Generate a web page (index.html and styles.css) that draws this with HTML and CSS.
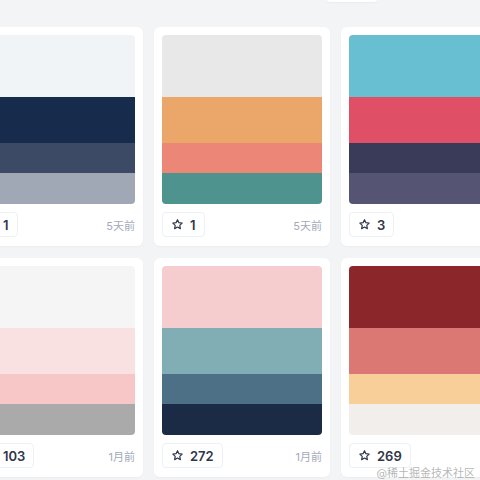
FILE: index.html
```html
<!DOCTYPE html>
<html lang="zh-CN">
<head>
    <meta charset="UTF-8">
    <meta name="viewport" content="width=device-width, initial-scale=1.0">
    <title>配色方案</title>
    <link rel="stylesheet" href="styles.css">
</head>
<body>

<div class="toolbar">
    <div class="toolbar-btn"></div>
</div>

<div class="palette-grid">
    <!-- 第一行 -->
    <div class="card">
        <div class="swatch">
            <div class="band b1" style="background:#f1f4f7"></div>
            <div class="band b2" style="background:#172b4d"></div>
            <div class="band b3" style="background:#3c4a66"></div>
            <div class="band b4" style="background:#a0a7b5"></div>
        </div>
        <div class="card-foot">
            <button class="star-btn"><svg viewBox="0 0 24 24"><path d="M12 3.2l2.6 5.5 6 .8-4.4 4.1 1.1 6L12 16.7l-5.3 2.9 1.1-6-4.4-4.1 6-.8z"/></svg>1</button>
            <span class="time">5天前</span>
        </div>
    </div>
    <div class="card">
        <div class="swatch">
            <div class="band b1" style="background:#e8e8e8"></div>
            <div class="band b2" style="background:#eba76a"></div>
            <div class="band b3" style="background:#ec8777"></div>
            <div class="band b4" style="background:#4f938f"></div>
        </div>
        <div class="card-foot">
            <button class="star-btn"><svg viewBox="0 0 24 24"><path d="M12 3.2l2.6 5.5 6 .8-4.4 4.1 1.1 6L12 16.7l-5.3 2.9 1.1-6-4.4-4.1 6-.8z"/></svg>1</button>
            <span class="time">5天前</span>
        </div>
    </div>
    <div class="card">
        <div class="swatch">
            <div class="band b1" style="background:#67bfd1"></div>
            <div class="band b2" style="background:#df4f66"></div>
            <div class="band b3" style="background:#3a3b58"></div>
            <div class="band b4" style="background:#555573"></div>
        </div>
        <div class="card-foot">
            <button class="star-btn"><svg viewBox="0 0 24 24"><path d="M12 3.2l2.6 5.5 6 .8-4.4 4.1 1.1 6L12 16.7l-5.3 2.9 1.1-6-4.4-4.1 6-.8z"/></svg>3</button>
            <span class="time">5天前</span>
        </div>
    </div>

    <!-- 第二行 -->
    <div class="card">
        <div class="swatch">
            <div class="band b1" style="background:#f5f5f5"></div>
            <div class="band b2" style="background:#f9e1e1"></div>
            <div class="band b3" style="background:#f7c7c8"></div>
            <div class="band b4" style="background:#aaaaaa"></div>
        </div>
        <div class="card-foot">
            <button class="star-btn"><svg viewBox="0 0 24 24"><path d="M12 3.2l2.6 5.5 6 .8-4.4 4.1 1.1 6L12 16.7l-5.3 2.9 1.1-6-4.4-4.1 6-.8z"/></svg>103</button>
            <span class="time">1月前</span>
        </div>
    </div>
    <div class="card">
        <div class="swatch">
            <div class="band b1" style="background:#f6cdcf"></div>
            <div class="band b2" style="background:#80aeb4"></div>
            <div class="band b3" style="background:#4e7086"></div>
            <div class="band b4" style="background:#1c2b45"></div>
        </div>
        <div class="card-foot">
            <button class="star-btn"><svg viewBox="0 0 24 24"><path d="M12 3.2l2.6 5.5 6 .8-4.4 4.1 1.1 6L12 16.7l-5.3 2.9 1.1-6-4.4-4.1 6-.8z"/></svg>272</button>
            <span class="time">1月前</span>
        </div>
    </div>
    <div class="card">
        <div class="swatch">
            <div class="band b1" style="background:#8b262b"></div>
            <div class="band b2" style="background:#dc7874"></div>
            <div class="band b3" style="background:#f8cf98"></div>
            <div class="band b4" style="background:#f1eeec"></div>
        </div>
        <div class="card-foot">
            <button class="star-btn"><svg viewBox="0 0 24 24"><path d="M12 3.2l2.6 5.5 6 .8-4.4 4.1 1.1 6L12 16.7l-5.3 2.9 1.1-6-4.4-4.1 6-.8z"/></svg>269</button>
            <span class="time">1月前</span>
        </div>
    </div>
</div>

<div class="watermark">@稀土掘金技术社区</div>

</body>
</html>
```

FILE: styles.css
```css
html, body {
    margin: 0;
    padding: 0;
    height: 100%;
    overflow: hidden;
}

body {
    position: relative;
    background: #f3f4f6;
    font-family: "Inter", "Noto Sans CJK SC", sans-serif;
    color: #2f3648;
}

.toolbar {
    display: flex;
    height: 27px;
    padding-left: 326px;
}

.toolbar-btn {
    width: 52px;
    height: 30px;
    margin-top: -28px;
    background: #fff;
    border-radius: 4px;
    box-shadow: 0 1px 2px rgba(0,0,0,0.04);
}

.palette-grid {
    display: grid;
    grid-template-columns: repeat(3, 176px);
    column-gap: 11px;
    row-gap: 12px;
    margin-left: -33px;
}

.card {
    background: #fff;
    border-radius: 6px;
    padding: 8px 8px 9px;
    box-shadow: 0 1px 2px rgba(20,30,50,0.03);
}

.swatch {
    display: flex;
    flex-direction: column;
    border-radius: 4px;
    overflow: hidden;
}

.band.b1 { height: 62px; }
.band.b2 { height: 46px; }
.band.b3 { height: 30px; }
.band.b4 { height: 31px; }

.card-foot {
    display: flex;
    align-items: center;
    justify-content: space-between;
    margin-top: 8px;
}

.star-btn {
    display: flex;
    align-items: center;
    gap: 6px;
    height: 25px;
    padding: 0 8px;
    border: 1px solid #edf0f4;
    border-radius: 4px;
    background: #fff;
    font-family: inherit;
    font-size: 13px;
    font-weight: 600;
    color: #2f3648;
    box-sizing: border-box;
}

.star-btn svg {
    width: 13px;
    height: 13px;
    fill: none;
    stroke: #2f3648;
    stroke-width: 2.2;
    stroke-linejoin: round;
}

.time {
    font-size: 11px;
    color: #a3aab9;
}

.watermark {
    position: absolute;
    right: 5px;
    bottom: 0;
    font-size: 11px;
    line-height: 13px;
    color: rgba(120,120,120,0.55);
}
```
